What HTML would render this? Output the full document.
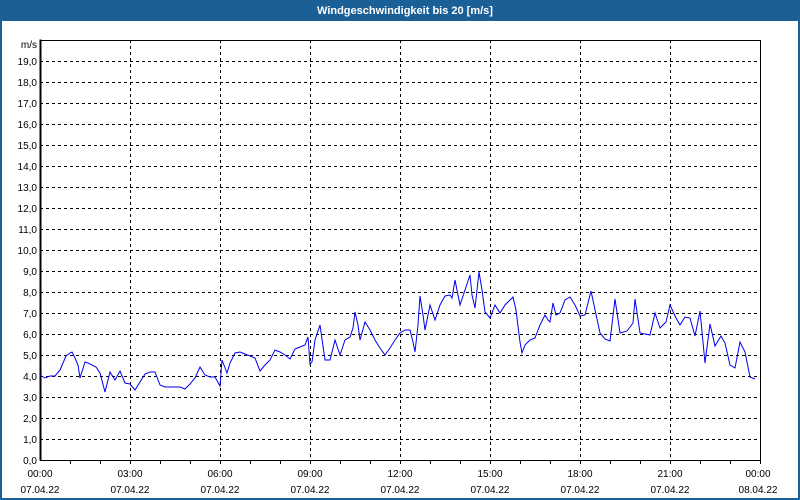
<!DOCTYPE html>
<html><head><meta charset="utf-8"><style>
html,body{margin:0;padding:0;background:#fff}
body{width:800px;height:500px;overflow:hidden;position:relative;font-family:"Liberation Sans",sans-serif}
</style></head><body>
<svg width="800" height="500" xmlns="http://www.w3.org/2000/svg" style="position:absolute;left:0;top:0">
<rect x="0" y="0" width="800" height="500" fill="#1b5f97"/>
<rect x="2" y="21" width="796" height="477" fill="#fff"/>
<text x="405" y="14" text-anchor="middle" fill="#fff" font-family="Liberation Sans" font-weight="bold" font-size="11">Windgeschwindigkeit bis 20 [m/s]</text>
<g stroke="#000" stroke-width="1" stroke-dasharray="3,3" shape-rendering="crispEdges">
<path d="M40 439.5H760M40 418.5H760M40 397.5H760M40 376.5H760M40 355.5H760M40 334.5H760M40 313.5H760M40 292.5H760M40 271.5H760M40 250.5H760M40 229.5H760M40 208.5H760M40 187.5H760M40 166.5H760M40 145.5H760M40 124.5H760M40 103.5H760M40 82.5H760M40 61.5H760"/>
<path d="M130.5 40V460M220.5 40V460M310.5 40V460M400.5 40V460M490.5 40V460M580.5 40V460M670.5 40V460"/>
</g>
<g stroke="#000" stroke-width="1" shape-rendering="crispEdges" fill="none">
<rect x="40.5" y="40.5" width="720" height="420"/>
<rect x="40" y="40" width="1" height="420" fill="#000"/>
<path d="M70.5 460V464M100.5 460V464M130.5 460V464M160.5 460V464M190.5 460V464M220.5 460V464M250.5 460V464M280.5 460V464M310.5 460V464M340.5 460V464M370.5 460V464M400.5 460V464M430.5 460V464M460.5 460V464M490.5 460V464M520.5 460V464M550.5 460V464M580.5 460V464M610.5 460V464M640.5 460V464M670.5 460V464M700.5 460V464M730.5 460V464M760.5 460V464"/>
</g>
<g font-family="Liberation Sans" font-size="10" fill="#000" text-anchor="end">
<text x="37" y="48">m/s</text>
<text x="37" y="65">19,0</text><text x="37" y="86">18,0</text><text x="37" y="107">17,0</text><text x="37" y="128">16,0</text><text x="37" y="149">15,0</text><text x="37" y="170">14,0</text><text x="37" y="191">13,0</text><text x="37" y="212">12,0</text><text x="37" y="233">11,0</text><text x="37" y="254">10,0</text><text x="37" y="275">9,0</text><text x="37" y="296">8,0</text><text x="37" y="317">7,0</text><text x="37" y="338">6,0</text><text x="37" y="359">5,0</text><text x="37" y="380">4,0</text><text x="37" y="401">3,0</text><text x="37" y="422">2,0</text><text x="37" y="443">1,0</text><text x="37" y="464">0,0</text>
</g>
<g font-family="Liberation Sans" font-size="10" fill="#000" text-anchor="middle">
<text x="40" y="477">00:00</text><text x="40" y="493">07.04.22</text>
<text x="130" y="477">03:00</text><text x="130" y="493">07.04.22</text>
<text x="220" y="477">06:00</text><text x="220" y="493">07.04.22</text>
<text x="310" y="477">09:00</text><text x="310" y="493">07.04.22</text>
<text x="400" y="477">12:00</text><text x="400" y="493">07.04.22</text>
<text x="490" y="477">15:00</text><text x="490" y="493">07.04.22</text>
<text x="580" y="477">18:00</text><text x="580" y="493">07.04.22</text>
<text x="670" y="477">21:00</text><text x="670" y="493">07.04.22</text>
<text x="758" y="477">00:00</text><text x="758" y="493">08.04.22</text>
</g>
<polyline fill="none" stroke="#0000ee" stroke-width="1" points="40,375 45,378 50,376 55,376 60,370 66,356 70,353 72,352 75,358 78,365 80,378 85,362 88,363 96,367 100,373 105,392 110,372 115,380 120,371 125,383 130,384 135,390 145,374 150,372 155,372 160,385 165,387 180,387 185,389 190,384 195,378 200,367 205,375 210,377 215,377 220,386 222,360 227,373 230,363 235,353 240,352 245,354 250,356 255,358 260,371 265,365 270,360 275,350 280,352 285,355 290,359 295,349 300,347 305,345 308,337 310,364 312,362 315,340 320,325 325,360 330,360 335,340 340,355 345,340 350,337 353,328 355,312 358,325 360,340 365,322 370,330 375,340 380,348 385,355 390,348 395,340 400,333 405,330 410,330 413,342 415,352 418,325 420,296 423,315 425,330 430,305 435,320 440,305 445,296 450,295 452,298 455,280 460,305 465,290 470,275 472,295 475,308 477,290 479,272 482,290 485,312 490,318 495,305 500,313 505,305 510,300 513,297 516,310 520,342 522,353 525,345 530,340 535,338 540,325 545,315 548,320 550,322 553,303 556,315 560,313 565,300 570,297 575,305 580,316 585,315 591,291 600,333 605,339 610,341 615,299 620,333 627,331 633,323 635,299 640,333 650,335 655,313 660,328 666,322 670,305 676,318 680,325 685,317 690,318 695,336 700,311 705,363 710,324 715,346 721,336 725,343 730,365 735,368 740,342 745,352 750,377 755,379"/>
</svg>
</body></html>
